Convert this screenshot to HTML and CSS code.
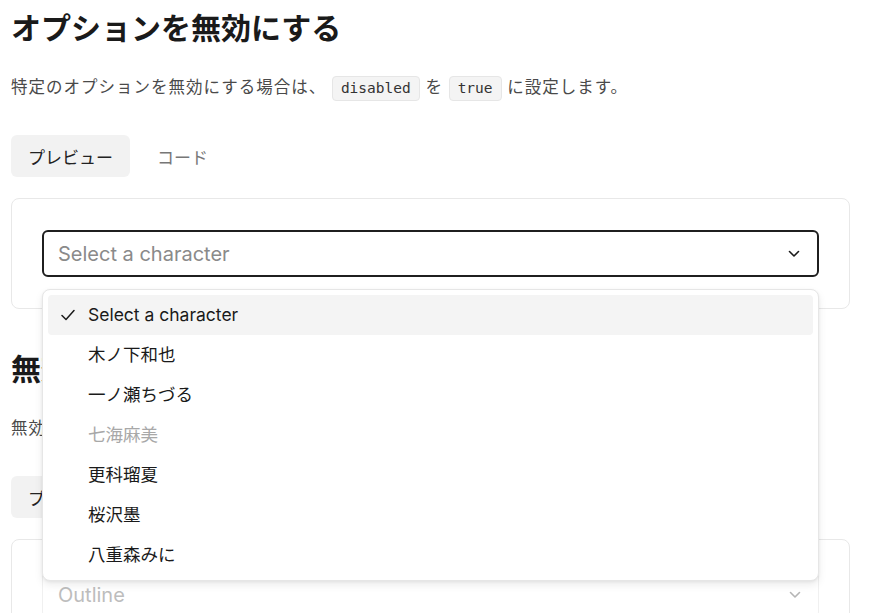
FILE: index.html
```html
<!DOCTYPE html>
<html lang="ja">
<head>
<meta charset="utf-8">
<link rel="stylesheet" href="styles.css">
</head>
<body>
<main class="page">
  <section class="section">
    <h2 class="title">オプションを無効にする</h2>
    <p class="desc">特定のオプションを無効にする場合は、 <code class="chip">disabled</code> を <code class="chip">true</code> に設定します。</p>
    <div class="tabs">
      <span class="tab tab-active">プレビュー</span>
      <span class="tab">コード</span>
    </div>
    <div class="card">
      <div class="select-wrap">
        <div class="select select-open">
          <span class="placeholder">Select a character</span>
          <svg class="chev" width="12" height="8" viewBox="0 0 12 8"><path d="M1.5 1.5 L6 6 L10.5 1.5" fill="none" stroke="#1a1a1a" stroke-width="1.6" stroke-linecap="round" stroke-linejoin="round"/></svg>
        </div>
        <ul class="menu">
          <li class="item item-active">
            <svg class="check" width="14" height="12" viewBox="0 0 14 12"><path d="M1 6.5 L5 10.5 L13 1.5" fill="none" stroke="#1a1a1a" stroke-width="1.5" stroke-linecap="round" stroke-linejoin="round"/></svg>
            Select a character
          </li>
          <li class="item">木ノ下和也</li>
          <li class="item">一ノ瀬ちづる</li>
          <li class="item item-disabled">七海麻美</li>
          <li class="item">更科瑠夏</li>
          <li class="item">桜沢墨</li>
          <li class="item">八重森みに</li>
        </ul>
      </div>
    </div>
  </section>
  <section class="section">
    <h2 class="title">無効なセレクト</h2>
    <p class="desc">無効にする場合は、 <code class="chip">disabled</code> を <code class="chip">true</code> に設定します。</p>
    <div class="tabs">
      <span class="tab tab-active">プレビュー</span>
      <span class="tab">コード</span>
    </div>
    <div class="card">
      <div class="select select-disabled">
        <span class="placeholder">Outline</span>
        <svg class="chev" width="12" height="8" viewBox="0 0 12 8"><path d="M1.5 1.5 L6 6 L10.5 1.5" fill="none" stroke="#b5b5b5" stroke-width="1.6" stroke-linecap="round" stroke-linejoin="round"/></svg>
      </div>
    </div>
  </section>
</main>
</body>
</html>
```
FILE: styles.css
```css
* { box-sizing: border-box; }
html, body { margin: 0; padding: 0; background: #fff; }
body {
  font-family: Inter, "Noto Sans CJK JP", sans-serif;
  color: #1a1a1a;
  overflow: hidden;
  height: 613px;
}
.page {
  width: 839px;
  margin-left: 11px;
}
.section { margin-bottom: 38px; }
.title {
  margin: 6px 0 0;
  font-size: 30px;
  line-height: 40px;
  font-weight: 700;
  font-family: "Noto Sans CJK JP", sans-serif;
  color: #1a1a1a;
}
.desc {
  margin: 28px 0 0;
  font-size: 16.5px;
  letter-spacing: 1px;
  line-height: 24px;
  color: #4a4a4a;
  font-family: "Noto Sans CJK JP", sans-serif;
}
.chip {
  display: inline-block;
  font-family: "DejaVu Sans Mono", monospace;
  font-size: 14.5px;
  letter-spacing: 0;
  line-height: 23px;
  padding: 0 8px;
  margin: 0 1px;
  background: #f4f4f4;
  border: 1px solid #e6e6e6;
  border-radius: 4px;
  color: #333;
}
.tabs {
  display: flex;
  gap: 10px;
  margin-top: 34px;
}
.tab {
  display: inline-flex;
  align-items: center;
  height: 42px;
  padding: 0 17px;
  font-size: 17px;
  color: #777;
  border-radius: 6px;
  font-family: "Noto Sans CJK JP", sans-serif;
}
.tab-active {
  background: #f2f2f2;
  color: #222;
}
.card {
  margin-top: 21px;
  border: 1px solid #e8e8e8;
  border-radius: 8px;
  padding: 31px 30px;
}
.select-wrap { position: relative; }
.select {
  display: flex;
  align-items: center;
  justify-content: space-between;
  height: 47px;
  padding: 0 17px 0 14px;
  border-radius: 6px;
  font-size: 20px;
}
.select-open { border: 2px solid #1f1f1f; }
.select-disabled { border: 1px solid #f0f0f0; padding-left: 15px; }
.placeholder { color: #8a8a8a; }
.select-disabled .placeholder { color: #bdbdbd; }
.menu {
  position: absolute;
  left: 0;
  right: 0;
  top: 59px;
  margin: 0;
  list-style: none;
  padding: 5px;
  background: #fff;
  border: 1px solid #e6e6e6;
  border-radius: 8px;
  box-shadow: 0 4px 8px rgba(0,0,0,0.08), 0 1px 3px rgba(0,0,0,0.06);
  z-index: 10;
}
.item {
  position: relative;
  height: 40px;
  line-height: 40px;
  padding-left: 40px;
  font-size: 17.5px;
  color: #1a1a1a;
  border-radius: 4px;
}
.item-active { background: #f4f4f4; }
.item-disabled { color: #a8a8a8; }
.check {
  position: absolute;
  left: 13px;
  top: 14px;
}
```
